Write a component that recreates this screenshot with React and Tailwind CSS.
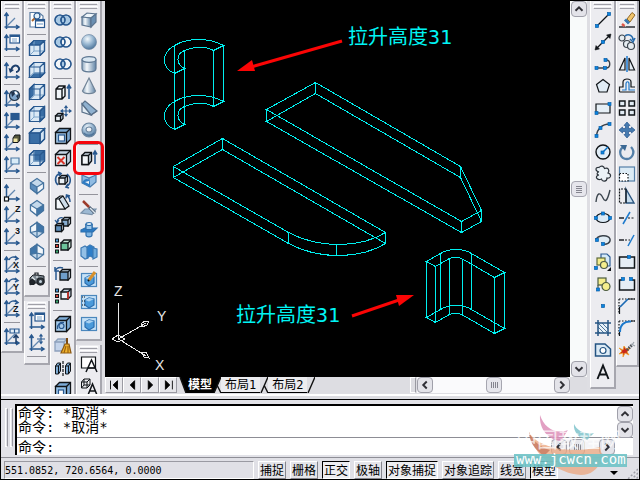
import { Fragment } from "react";

const B = "#28588f";
const K = "#101418";
const MID = "#7fa6cb";
const PALE = "#d3e4f3";

function Svg({ children, stroke = B }) {
  return (
    <svg viewBox="0 0 16 16" className="h-4 w-4 overflow-visible" fill="none" stroke={stroke} strokeWidth="1.2" aria-hidden="true">
      {children}
    </svg>
  );
}

// ---- UCS icons: the two axes plus a mark
function Axes({ children, diag }) {
  return (
    <Svg>
      <path d="M2.5 2V15H14M0.5 4L2.5 1L4.5 4M12 13L15 15L12 17M0.5 15H2.5V17" strokeWidth="1.5" />
      {diag && <path d="M3 14L11 6" strokeWidth="1.3" stroke="#6488b0" />}
      {children}
    </Svg>
  );
}

const Mark = ({ t, x = 10, y = 6 }) => (
  <text x={x} y={y} fontSize="9" fontWeight="700" fill={K} stroke="none" fontFamily="Liberation Sans, sans-serif">{t}</text>
);

const ucs = <Axes diag />;
const ucsDialog = (
  <Axes>
    <rect x="6" y="1" width="9.5" height="8" fill="#fff" />
    <path d="M6 2H15.5" strokeWidth="2" />
    <path d="M8 5H13M8 7H13" stroke={MID} />
  </Axes>
);
const ucsPrev = (
  <Axes>
    <path d="M7 9C8 3 13 2 15 6C15.500 8 14 10 12 10" strokeWidth="2" stroke="#1d3f6c" />
    <path d="M4.500 6L6 11L10 8Z" fill="#1d3f6c" stroke="none" />
  </Axes>
);
const ucsWorld = (
  <Axes diag>
    <circle cx="10.500" cy="5.500" r="5" fill={MID} stroke="#26384a" />
    <path d="M7 2L10 1L11 4L8 7ZM12 6L15 4L14 9Z" fill="#20344d" stroke="none" />
    <path d="M11 2L13 4" stroke="#fff" strokeWidth="2" />
  </Axes>
);
const ucsObject = <Axes diag><rect x="7" y="1.500" width="8" height="6" fill={B} /></Axes>;
const ucsFace = (
  <Axes diag>
    <path d="M9 4L11 1H16V6L14 8.500H9Z" fill="#55563c" stroke={K} strokeWidth="1" />
    <path d="M9.500 4.500H13.500V8H9.500Z" fill="#efe5a4" stroke="none" />
  </Axes>
);
const ucsView = <Axes diag><path d="M7 2H15V8H7Z" fill="#d9ecf8" stroke="#4f7aa5" /></Axes>;
const ucsOrigin = <Axes diag><rect x="0.500" y="13" width="4" height="4" fill="#fff" stroke={K} /></Axes>;
const ucsZ = <Axes diag><Mark t="Z" x={11} /></Axes>;
const ucs3 = <Axes diag><Mark t="3" x={11} /></Axes>;
const rot = (t) => (
  <Axes diag>
    <path d="M5 4C6 1 10 0 13 2M11 0L14 2.500L11 4" strokeWidth="1.500" />
    <Mark t={t} x={9} y={12} />
  </Axes>
);
const ucsApply = (
  <Axes diag>
    <path d="M6 1H15V5H6ZM10.500 1V5" fill="#e5eff8" />
    <path d="M12 16V8M9.500 10L12 7L14.500 10" stroke="#1d3f6c" strokeWidth="1.500" />
  </Axes>
);
const ucsMove = (
  <Axes diag>
    <path d="M12 1V9M8 5H16M10.500 2.500L12 0.500L13.500 2.500M10.500 7.500L12 9.500L13.500 7.500" />
  </Axes>
);

// ---- view icons
function ViewCube({ top, front, side, bottom, left, back }) {
  return (
    <Svg>
      <path d="M0.500 5L5 0.500H15.500V11L11 15.500H0.500Z" fill="#dbe9f5" />
      {back && <path d="M5 0.500H15.500V11H5Z" fill={back} />}
      {left && <path d="M0.500 5L5 0.500V11L0.500 15.500Z" fill={left} />}
      {bottom && <path d="M0.500 15.500L5 11H15.500L11 15.500Z" fill={bottom} />}
      {side && <path d="M11 5L15.500 0.500V11L11 15.500Z" fill={side} />}
      {top && <path d="M0.500 5L5 0.500H15.500L11 5Z" fill={top} />}
      {front && <path d="M0.500 5H11V15.500H0.500Z" fill={front} />}
      {!front && <path d="M5 0.500V11L0.500 15.500M5 11H15.500" stroke={MID} strokeWidth="1" />}
      <path d="M0.500 5H11V15.500H0.500ZM11 5L15.500 0.500M0.500 5L5 0.500H15.500V11L11 15.500" />
    </Svg>
  );
}

function IsoCube({ l = "#f2f7fb", r = "#f2f7fb", t = "#c4d9eb", open }) {
  return (
    <Svg stroke="#46749f">
      <path d="M1.500 5L8 0.500L14.500 5V10.500L8 15.500L1.500 10.500Z" fill={t} />
      {open ? (
        <>
          <path d="M1.500 5L8 0.500V9L1.500 10.500Z" fill={l} />
          <path d="M14.500 5L8 0.500V9L14.500 10.500Z" fill={r} />
          <path d="M8 9V15.500" />
        </>
      ) : (
        <>
          <path d="M1.500 5L8 9V15.500L1.500 10.500Z" fill={l} />
          <path d="M14.500 5L8 9V15.500L14.500 10.500Z" fill={r} />
        </>
      )}
    </Svg>
  );
}

const namedViews = (
  <Svg>
    <path d="M1 0.500H10L14 4V15H1Z" fill="#fff" stroke="#5b7da3" />
    <path d="M3 9L6 6" stroke="#a8642d" strokeWidth="2" />
    <circle cx="8" cy="4" r="3" fill="#e1f0fa" />
    <rect x="6.500" y="7.500" width="9" height="8" fill="#fff" />
    <path d="M6.500 8.500H15.500" strokeWidth="2" />
    <path d="M8 12H14" stroke={MID} />
  </Svg>
);
const camera = (
  <Svg stroke="#1c2126">
    <path d="M1 6L4 3H8L15 4V11L11 13L8 11H4L1 13Z" fill="#7d8891" strokeWidth="1" />
    <circle cx="3.500" cy="10" r="2.500" fill="#20262c" />
    <circle cx="11.500" cy="9.500" r="3.500" fill="#30383f" />
    <circle cx="11.500" cy="9.500" r="1.500" fill="#c3d2dd" stroke="none" />
    <path d="M6 3V1H9V3" />
    <path d="M3 5L6 8M8 4V6" stroke="#e1e6ea" />
  </Svg>
);

// ---- solid editing
const rings = (a, b, mid) => (
  <Svg>
    <circle cx="5" cy="8" r="5" fill={a} />
    <circle cx="11" cy="8" r="5" fill={b} />
    <path d="M8 4C10.500 6.500 10.500 9.500 8 12C5.500 9.500 5.500 6.500 8 4Z" fill={mid} />
    <circle cx="5" cy="8" r="5" />
    <circle cx="11" cy="8" r="5" />
  </Svg>
);

const Box = ({ x = 0, y = 4, s = 9, d = 3, fill = "#eaf1f7", stroke = K, deep = "#c3d4e4" }) => (
  <g stroke={stroke} strokeWidth="1.3">
    <path d={`M${x} ${y}l${d} ${-d}h${s}v${s}l${-d} ${d}z`} fill={deep} />
    <path d={`M${x} ${y}h${s}v${s}h${-s}z`} fill={fill} />
    <path d={`M${x + s} ${y}l${d} ${-d}`} />
  </g>
);

const extrudeFaces = (
  <Svg stroke={K}>
    <path d="M1 5L4 2H10V12L7 15H1ZM1 5H7V15M7 5L10 2" fill="#f1f6fa" strokeWidth="1.400" />
    <path d="M14 15V2M12 4.500L14 1L16 4.500" stroke={B} strokeWidth="1.600" />
  </Svg>
);
const moveFaces = (
  <Svg>
    <Box x={0.500} y={10} s={5} d={2.500} />
    <path d="M11 0V10M6 5H16M9.500 2L11 0L12.500 2M9.500 8L11 10L12.500 8M8 3.500L6 5L8 6.500M14 3.500L16 5L14 6.500" />
  </Svg>
);
const offsetFaces = <Svg><Box x={0.500} y={4.500} s={11} d={4} fill="#9fc3e3" deep="#7aa7d2" /><rect x="3.500" y="7" width="6" height="6" fill="#eef5fa" stroke={B} /></Svg>;
const deleteFaces = <Svg><Box x={0.500} y={4.500} s={11} d={4} /><path d="M2.500 7L9.500 14M9.500 7L2.500 14" stroke="#d8372c" strokeWidth="2" /></Svg>;
const rotateFaces = (
  <Svg>
    <Box x={4} y={6} s={6} d={2.500} />
    <path d="M3 13C-1 9 0 3 5 1.500M3 0L6 1.500L4 4M12 2C17 6 16 12 11 15M13 12L11 15L14 16" strokeWidth="1.600" />
  </Svg>
);
const taperFaces = (
  <Svg stroke={K}>
    <path d="M1 5L5 2H8L14 12L10 15H1Z" fill="#cfdeeb" />
    <path d="M1 5H4L10 15H1ZM4 5L8 2" fill="#f3f7fa" />
    <path d="M15 8C15 5 14 3 12 2M11 4.500L11.500 1L15 2" stroke={B} strokeWidth="1.500" />
  </Svg>
);
const copyFaces = (
  <Svg>
    <Box x={7} y={4} s={6} d={2.500} fill="#86add0" />
    <Box x={0.500} y={9.500} s={6} d={2} fill="#5f8fbc" />
    <path d="M2 6C2 3 5 1 8 2M0 4L2 7L4 4" />
  </Svg>
);
const swatches = (
  <g strokeWidth="1">
    <rect x="0.500" y="1" width="3" height="3" fill="#4b9fe0" stroke={K} />
    <rect x="0.500" y="6.500" width="3" height="3" fill="#d8453c" stroke={K} />
    <rect x="0.500" y="12" width="3" height="3" fill="#3aa76d" stroke={K} />
  </g>
);
const colorFaces = <Svg>{swatches}<Box x={6} y={5} s={7} d={3} fill="#6cc49b" deep="#c5e6d6" /></Svg>;
const copyEdges = (
  <Svg>
    <Box x={5} y={6} s={8} d={2.500} fill="#6e9ecb" />
    <path d="M1 14V5M0 5C2 1 5 1 8 2M0 1V5H4" strokeWidth="1.500" />
  </Svg>
);
const colorEdges = <Svg>{swatches}<Box x={6} y={4} s={7} d={3} /><path d="M13 4V11" stroke="#dd2c22" strokeWidth="1.500" /></Svg>;
const imprint = (
  <Svg>
    <Box x={0.500} y={4.500} s={11} d={4} fill="#a5caea" deep="#7eadd8" />
    <circle cx="6.500" cy="10" r="2.500" /><path d="M2.500 13C2 8 5 6 9 6.500" />
  </Svg>
);
const clean = (
  <Svg>
    <Box x={0} y={4} s={9} d={3} fill="#c3d3ea" stroke="#8da0bc" />
    <path d="M12 0V6" stroke="#7a4a12" strokeWidth="2" />
    <path d="M10 6H14L16 15H6Z" fill="#f0b32f" stroke="#8d5a12" />
    <path d="M11 8L9 15M13 8V15" stroke="#9d6510" />
  </Svg>
);
const separate = (
  <Svg stroke={K}>
    <path d="M0.500 6L2.500 3H5.500V11L3.500 14H0.500ZM0.500 6H3.500V14M3.500 6L5.500 3M10.500 6L12.500 3H15.500V11L13.500 14H10.500ZM10.500 6H13.500V14M13.500 6L15.500 3" fill="#7eaad1" strokeWidth="1" />
    <path d="M8 1V16" strokeDasharray="3 1" />
  </Svg>
);
const shell = <Svg><Box x={0.500} y={4.500} s={11} d={4} fill="#94bfe6" deep="#7caad6" /><rect x="3.500" y="8" width="5" height="5" fill="#fff" stroke={B} /></Svg>;

// ---- solids
const solidBox = (
  <Svg stroke="#5d7590">
    <path d="M1 5L6 1L15 2L10 6Z" fill="#eef5fa" />
    <path d="M1 5L10 6V15L1 13Z" fill="url(#steel)" />
    <path d="M10 6L15 2V10L10 15Z" fill="#6a8fb2" />
  </Svg>
);
const sphere = <Svg stroke="#7088a3"><circle cx="8" cy="8" r="7.500" fill="url(#ball)" strokeWidth="0.700" /></Svg>;
const cylinder = (
  <Svg stroke="#5f7893">
    <path d="M1 3.500V12.500C1 17 15 17 15 12.500V3.500" fill="url(#steel)" />
    <ellipse cx="8" cy="3.500" rx="7" ry="2.800" fill="#d9e7f2" />
  </Svg>
);
const cone = <Svg stroke="#718498"><path d="M8 0L14.500 13C13 16.500 3 16.500 1.500 13Z" fill="url(#steel)" /></Svg>;
const wedge = (
  <Svg stroke="#5a718a">
    <path d="M1 4L4 1L16 11L10 15Z" fill="#8fb1d0" />
    <path d="M1 4L10 15L1 12Z" fill="#e3edf5" />
    <path d="M10 15L16 11" />
  </Svg>
);
const torus = (
  <Svg stroke="#6b859f">
    <circle cx="8" cy="8" r="7" fill="url(#ball)" />
    <ellipse cx="8" cy="7.500" rx="3" ry="2.500" fill="#eef1f5" />
    <path d="M3 11C5 14 11 14 13 11" stroke="#4d7298" />
  </Svg>
);
const extrude = (
  <Svg stroke={K}>
    <path d="M1 5.500L4 2.500H10.500V11L7.500 14.500H1Z" fill="#cfdbe6" strokeWidth="1.400" />
    <path d="M1 5.500H7.500V14.500H1ZM7.500 5.500L10.500 2.500" fill="#f3f6f9" strokeWidth="1.400" />
    <path d="M14 14V2M12 4.500L14 1L16 4.500" stroke={B} strokeWidth="1.600" />
  </Svg>
);
const revolve = (
  <Svg stroke="#4a7cac">
    <path d="M1 3L7 1L15 3V10L9 15L1 11Z" fill="#8fbbe2" />
    <path d="M1 3L8 6L15 3M8 6V9" fill="#d8e8f4" />
    <path d="M1 11C3 6 8 6 9 10V15Z" fill="#2f7cc4" stroke="none" />
    <path d="M4 10L8 9V12Z" fill="#eef4f9" stroke="none" />
  </Svg>
);
const slice = (
  <Svg stroke="#7b93ab">
    <path d="M0 13L4 9L15 9L11 14.500Z" fill="#9db9d3" />
    <path d="M8 7L14 13" stroke="#44566a" strokeWidth="3" />
    <path d="M9 8L15 14" stroke="#dce6ee" strokeWidth="1.500" />
    <path d="M2 1L8 7" stroke="#9c3b2b" strokeWidth="2.500" />
  </Svg>
);
const section = (
  <Svg stroke="#2e70ae">
    <path d="M5 2V13C5 15.500 11 15.500 11 13V2" fill="#7fb4e2" />
    <path d="M0 8L4 6H16L12 10H0Z" fill="#2b7bc5" />
    <path d="M5 2V7.500H11V2" fill="#9cc7ea" />
    <ellipse cx="8" cy="2" rx="3" ry="1.500" fill="#e0eef8" />
  </Svg>
);
const interfere = (
  <Svg stroke="#3c7ab5">
    <path d="M0 4L4 2L7 4V14L4 15L0 12Z" fill="#93c0e6" />
    <path d="M6 3L9 1L13 3V14L9 12L6 14Z" fill="#2d7dc8" />
    <path d="M12 4L16 5V13L12 15Z" fill="#6eaadc" />
  </Svg>
);
const setupBox = (extra) => (
  <Svg stroke="#4b87bd">
    <rect x="0.500" y="1.500" width="15" height="13" fill="#c6e2f7" />
    <path d="M4 6L8 4L13 5V11L8 14L4 11Z" fill="#4b9ada" stroke="#2c6fb0" />
    <path d="M4 6L8 4L13 5L8 7.500Z" fill="#a9d2f2" stroke="none" />
    {extra}
  </Svg>
);
const setupDraw = setupBox(<><path d="M8 8L14 0" stroke="#d8902b" strokeWidth="3" /><path d="M7 9L8 8" stroke={K} strokeWidth="2" /></>);
const setupView = setupBox(<path d="M1 3H4M1 7H4M1 11H4" stroke={K} strokeDasharray="1 1" />);
const setupProfile = setupBox(null);
const draftA = (
  <Svg stroke={K}>
    <path d="M0.500 1H14.500V12H0.500Z" fill="#fff" />
    <path d="M5 16L10.500 4L16 16M7 12H14" strokeWidth="1.500" />
  </Svg>
);
const draftBox = (
  <Svg stroke={K}>
    <path d="M0.500 4L3 1H9V7L6 10H0.500ZM0.500 4H6V10M6 4L9 1M3 1V7H9M3 7L0.500 10" strokeWidth="1" />
    <path d="M7 17L11.500 6L16 17M9 13H14" strokeWidth="1.500" />
  </Svg>
);

// ---- draw
const Dot = ({ x, y }) => <rect x={x - 1.5} y={y - 1.5} width="3" height="3" fill="#0a84e0" stroke="#0b5fa8" strokeWidth="0.7" />;
const line = <Svg stroke={K}><path d="M2 14L14 2" /><Dot x={2} y={14} /><Dot x={14} y={2} /></Svg>;
const xline = <Svg stroke={K}><path d="M1 15L15 1" /><path d="M0 16L1 11.500L4.500 15ZM16 0L11.500 1L15 4.500Z" fill={K} strokeWidth="0.500" /><Dot x={8} y={8} /></Svg>;
const pline = <Svg stroke="#3a4149"><path d="M1 12H11C16 12 16 4 11 4" strokeWidth="1.400" /><Dot x={1.5} y={12} /><Dot x={10} y={12} /><Dot x={10.5} y={4} /></Svg>;
const polygon = <Svg stroke={K}><path d="M8 1.500L14.500 6.500L12 14H4L1.500 6.500Z" fill="#e1ecf5" /></Svg>;
const rectangle = <Svg stroke={K}><path d="M1 4H15V13H1Z" fill="#e6eff6" /><Dot x={1.5} y={13} /><Dot x={14.5} y={4} /></Svg>;
const arc = <Svg stroke="#3a4149"><path d="M1.500 14C2 7 7 2 14.500 2" strokeWidth="1.400" /><Dot x={1.5} y={14} /><Dot x={5.5} y={6} /><Dot x={14.5} y={2} /></Svg>;
const circle = <Svg stroke={K}><circle cx="8" cy="8" r="7" fill="#e1edf7" strokeWidth="1.400" /><path d="M8 8L13 3" stroke="#0a72c8" strokeWidth="1.500" /><Dot x={7.5} y={8.5} /></Svg>;
const revcloud = <Svg stroke="#2d343b"><path d="M4 6C0 5 0 1 4 1.500C6 -1 9 0 9.500 2.500C13 1 15 4 13 7C17 8 16 13 12 12C12 16 7 16 6.500 13C2 15 -1 10 4 9C1 9 2 6 4 6Z" fill="#eaf1f6" /></Svg>;
const spline = <Svg stroke="#3b444d"><path d="M1 14C2 4 5 4 8 10C11 16 13 10 15 2" strokeWidth="1.400" /></Svg>;
const ellipse = <Svg stroke={K}><ellipse cx="8" cy="8" rx="7" ry="4.500" fill="#dbeaf6" /><Dot x={1} y={8} /><Dot x={15} y={8} /><Dot x={8} y={3.5} /></Svg>;
const ellipseArc = <Svg stroke="#3a4149"><path d="M1 8C2 3 13 2 15 7C16 11 11 13 8 12" fill="#dfebf4" strokeWidth="1.400" /><Dot x={2} y={8} /><Dot x={8} y={12} /></Svg>;
const insertBlock = (
  <Svg stroke="#2c5c94">
    <path d="M6 0H12L15 3V12H6Z" fill="#d4e9f8" />
    <rect x="2" y="4" width="8" height="7" fill="#f5ee8c" stroke="#5e6a3d" />
    <circle cx="9" cy="11" r="3.500" fill="#f5ee8c" stroke="#4c5a48" />
    <Dot x={1} y={14} />
    <path d="M16 13V17H12Z" fill={K} stroke="none" />
  </Svg>
);
const makeBlock = <Svg stroke="#4b5b40"><rect x="3" y="2" width="8" height="7" fill="#f5ee8c" /><circle cx="11" cy="10.500" r="4" fill="#f5ee8c" /><path d="M3 9V14" /><Dot x={3} y={13.5} /></Svg>;
const point = <Svg><Dot x={8} y={8} /></Svg>;
const hatch = (
  <Svg stroke="#245482">
    <path d="M3 3H13V13H3Z" fill="#e7f1f8" stroke="none" />
    <path d="M3 7L9 13M3 3L13 13M7 3L13 9M3 11L5 13" strokeWidth="0.800" />
    <path d="M3 0V16M13 0V16M0 3H16M0 13H16" strokeWidth="1.500" />
  </Svg>
);
const region = <Svg stroke="#245482"><path d="M0.500 2H10L15.500 7V14H0.500Z" fill="#dbeaf5" strokeWidth="1.500" /><circle cx="8" cy="8.500" r="3" fill="#fff" /></Svg>;
const mtext = <Svg stroke={K}><path d="M2.500 15L8 1.500L13.500 15M4.500 10.500H11.500" strokeWidth="1.900" /></Svg>;

// ---- modify
const erase = (
  <Svg stroke={K}>
    <path d="M0 15H16" strokeWidth="1.300" />
    <path d="M8 7L13 0.500L16 3L11 10Z" fill="#f1c56c" stroke="#946a28" strokeWidth="1" />
    <path d="M6 7.500L10 11.500" stroke="#3676b0" strokeWidth="3" />
    <path d="M4 10.500L7.500 13.500" stroke="#f0efec" strokeWidth="3" />
    <path d="M3 12L5.500 14" stroke="#df5749" strokeWidth="2.500" />
  </Svg>
);
const copy = (
  <Svg stroke="#3c454e">
    <circle cx="3" cy="4" r="3" fill="#e6edf2" /><circle cx="8" cy="10" r="3.500" fill="#e6edf2" /><circle cx="12" cy="12" r="3.500" fill="#e6edf2" />
    <path d="M6 2C10 -1 14 2 14 6M11 5L14 8L16 4" stroke="#256aab" strokeWidth="1.600" />
  </Svg>
);
const mirror = <Svg stroke={K}><path d="M6 2V14H0.500ZM10 2V14H15.500Z" fill="#e5edf4" /><path d="M8 0V16" stroke="#1b7ad0" strokeWidth="1.500" /></Svg>;
const offset = <Svg stroke={K}><path d="M0.500 14H16M0.500 14V9H4V4C4 0 12 0 12 4V9H16" /><path d="M3 12H7V6C7 3 10 3 10 6V12H16" stroke="#1d77ca" /></Svg>;
const array = <Svg stroke={K}><path d="M0.500 1H6V6H0.500ZM10 1H15.500V6H10ZM0.500 10H6V15H0.500ZM10 10H15.500V15H10Z" fill="#e2ecf5" strokeWidth="1.400" /></Svg>;
const move = <Svg><path d="M8 0L11 3.500H9.500V6.500H12.500V5L16 8L12.500 11V9.500H9.500V12.500H11L8 16L5 12.500H6.500V9.500H3.500V11L0 8L3.500 5V6.500H6.500V3.500H5Z" fill="#467bb0" strokeWidth="0.700" /></Svg>;
const rotate = <Svg><path d="M12 3C17 8 13 15 8 15C1 15 -1 7 4 3" strokeWidth="2.300" stroke="#547fa8" /><path d="M1 1L8 1L6 7Z" fill="#3b6894" stroke="none" /></Svg>;
const scale = <Svg stroke="#547fa8"><rect x="0.500" y="1" width="15" height="14" fill="#dcebf5" /><path d="M0.500 7.500H9V15H0.500Z" fill="#fff" stroke={K} strokeDasharray="1.500 1.500" /></Svg>;
const stretch = <Svg stroke={K}><path d="M7 1L15 15H7Z" fill="#c6dced" stroke="#2b5580" strokeWidth="1.400" /><path d="M7 1H0.500V15H7" strokeDasharray="2 1" /><path d="M7 1V15" /></Svg>;
const trim = <Svg stroke={K}><path d="M0 8H5" strokeWidth="1.400" /><path d="M9 8H16" strokeDasharray="2 1.500" /><path d="M4 14L11 2" stroke="#1c79cc" strokeWidth="1.500" /></Svg>;
const extend = <Svg stroke={K}><path d="M0 8H5" strokeWidth="1.400" /><path d="M6 8H11" strokeDasharray="2 1.500" /><path d="M9 14L15 3" stroke="#1c79cc" strokeWidth="1.500" /></Svg>;
const breakPt = <Svg stroke={K}><path d="M0.500 3H15.500V14H0.500Z" fill="#e5edf5" strokeWidth="1.500" /><Dot x={10} y={3} /></Svg>;
const breakTwo = <Svg stroke={K}><path d="M3 4H0.500V14H15.500V4H13" fill="#e5edf5" strokeWidth="1.500" /><Dot x={4} y={3} /><Dot x={12} y={3} /></Svg>;
const chamfer = <Svg stroke={K}><path d="M0 1H16M0 1V16" strokeDasharray="1.500 1.500" /><path d="M0.500 16V9M9 1H16" /><path d="M1 9L9 1" stroke="#1c6ab4" strokeWidth="1.700" /></Svg>;
const fillet = <Svg stroke={K}><path d="M0 1H16M0 1V16" strokeDasharray="1.500 1.500" /><path d="M0.500 16V12M12 1H16" /><path d="M1 12C1 5 5 1 12 1.500" stroke="#1c79cc" strokeWidth="2" /></Svg>;
const explode = (
  <Svg>
    <path d="M0 6L4 8L5 4L7 7L11 6L8 10L10 13L6 11L4 15L4 11L0 12L3 9Z" fill="#c9281c" stroke="#f0a022" strokeWidth="0.800" />
    <path d="M8 8L13 3" stroke="#4a4f55" strokeWidth="3" strokeDasharray="1.500 1" />
    <path d="M12 2L16 4M15 0L13 3" stroke="#9aa2aa" />
  </Svg>
);

const FACE = "#3a6ea5";
const SEP = "|";

const UCS_BAR = [
  ["UCS", ucs], ["Display UCS Dialog", ucsDialog], SEP, ["UCS Previous", ucsPrev], SEP, ["World UCS", ucsWorld],
  ["Object UCS", ucsObject], ["Face UCS", ucsFace], ["View UCS", ucsView], SEP, ["Origin UCS", ucsOrigin],
  ["Z Axis Vector UCS", ucsZ], ["3 Point UCS", ucs3], SEP, ["X Axis Rotate UCS", rot("X")],
  ["Y Axis Rotate UCS", rot("Y")], ["Z Axis Rotate UCS", rot("Z")], SEP, ["Apply UCS", ucsApply],
];
const VIEW_BAR = [
  ["Named Views", namedViews], SEP, ["Top View", <ViewCube top={FACE} />], ["Bottom View", <ViewCube bottom={FACE} />],
  ["Left View", <ViewCube left={FACE} />], ["Right View", <ViewCube side={FACE} />],
  ["Front View", <ViewCube front={FACE} top={PALE} side={PALE} />], ["Back View", <ViewCube back={FACE} />], SEP,
  ["SW Isometric", <IsoCube l="#5c8ebd" />], ["SE Isometric", <IsoCube r="#3f75a8" />],
  ["NE Isometric", <IsoCube open r="#3f75a8" />], ["NW Isometric", <IsoCube open l="#3f75a8" />], SEP, ["Camera", camera],
];
const UCS2_BAR = [["UCS Dialog", ucsDialog], ["Move UCS Origin", ucsMove], SEP];
const SOLIDEDIT_BAR = [
  ["Union", rings("#a9c9e4", "#a9c9e4", "#a9c9e4")], ["Subtract", rings("#a9c9e4", "#f2f5f8", "#f2f5f8")],
  ["Intersect", rings("#f2f5f8", "#f2f5f8", "#a9c9e4")], SEP, ["Extrude Faces", extrudeFaces], ["Move Faces", moveFaces],
  ["Offset Faces", offsetFaces], ["Delete Faces", deleteFaces], ["Rotate Faces", rotateFaces], ["Taper Faces", taperFaces],
  ["Copy Faces", copyFaces], ["Color Faces", colorFaces], SEP, ["Copy Edges", copyEdges], ["Color Edges", colorEdges], SEP,
  ["Imprint", imprint], ["Clean", clean], ["Separate", separate], ["Shell", shell],
];
const SOLIDS_BAR = [
  ["Box", solidBox], ["Sphere", sphere], ["Cylinder", cylinder], ["Cone", cone], ["Wedge", wedge], ["Torus", torus], SEP,
  ["Extrude", extrude, true], ["Revolve", revolve], SEP, ["Slice", slice], ["Section", section], ["Interfere", interfere], SEP,
  ["Setup Drawing", setupDraw], ["Setup View", setupView], ["Setup Profile", setupProfile],
];
const TEXT_BAR = [["Draft Text", draftA], ["Draft Box", draftBox]];
const DRAW_BAR = [
  ["Line", line], ["Construction Line", xline], ["Polyline", pline], ["Polygon", polygon], ["Rectangle", rectangle],
  ["Arc", arc], ["Circle", circle], ["Revision Cloud", revcloud], ["Spline", spline], ["Ellipse", ellipse],
  ["Ellipse Arc", ellipseArc], ["Insert Block", insertBlock], ["Make Block", makeBlock], ["Point", point],
  ["Hatch", hatch], ["Region", region], ["Multiline Text", mtext],
];
const MODIFY_BAR = [
  ["Erase", erase], ["Copy", copy], ["Mirror", mirror], ["Offset", offset], ["Array", array], ["Move", move],
  ["Rotate", rotate], ["Scale", scale], ["Stretch", stretch], ["Trim", trim], ["Extend", extend],
  ["Break at Point", breakPt], ["Break", breakTwo], ["Chamfer", chamfer], ["Fillet", fillet], ["Explode", explode],
];

function Toolbar({ items, label }) {
  return (
    <div role="toolbar" aria-label={label} className="flex shrink-0 flex-col border-r-2 border-b-2 border-[#a6a6ae] border-l border-l-white bg-[#ececf0] pb-1">
      <div className="mx-0.5 mt-px mb-px h-[3px] rounded-sm border border-white border-b-[#a0a0a8]" />
      <div className="mx-0.5 h-[3px] rounded-sm border border-white border-b-[#a0a0a8]" />
      {items.map((item, i) =>
        item === SEP ? (
          <div key={i} className="flex h-1.5 items-center px-0.5">
            <div className="h-px flex-1 bg-[#94949c]" />
          </div>
        ) : (
          <button key={i} type="button" aria-label={item[0]} className="relative flex h-[22px] w-full items-center justify-center">
            {item[1]}
            {item[2] && <span className="absolute -inset-x-1 -inset-y-1.5 z-10 rounded-md border-[3px] border-[#f5050d]" />}
          </button>
        )
      )}
    </div>
  );
}

const ARROWS = {
  up: "M4 10L8 6L12 10",
  down: "M4 6L8 10L12 6",
  left: "M10 4L6 8L10 12",
  right: "M6 4L10 8L6 12",
};

function ScrollButton({ dir }) {
  return (
    <button type="button" aria-label={`Scroll ${dir}`} className="flex h-4 w-4 shrink-0 items-center justify-center rounded-sm border border-[#a0a0aa] bg-[#e3e3e9]">
      <svg viewBox="0 0 16 16" className="h-4 w-4" fill="none" stroke="#303036" strokeWidth="2.2"><path d={ARROWS[dir]} /></svg>
    </button>
  );
}

function Thumb({ vertical }) {
  return (
    <div className="flex h-4 w-4 shrink-0 items-center justify-center rounded-sm border border-[#a6a6b0] bg-[#e6e6ec]">
      <svg viewBox="0 0 8 8" className="h-2 w-2" stroke="#85858f" strokeWidth="1" shapeRendering="crispEdges">
        <path d={vertical ? "M1 1.5H7M1 3.5H7M1 5.5H7M1 7.5H7" : "M1.5 1V7M3.5 1V7M5.5 1V7M7.5 1V7"} />
      </svg>
    </div>
  );
}

function Drawing() {
  return (
    <svg viewBox="105 1 465 376" preserveAspectRatio="xMinYMin meet" className="block h-full w-full" fill="none">
      <g stroke="#00f0f0" strokeWidth="1" shapeRendering="crispEdges">
        {/* hook-shaped part, top left */}
        {[0, 56].map((dy) => (
          <path key={dy} transform={`translate(0 ${dy})`} d="M174.500 45.500C187 38 208 37 223.500 45.500L213.500 50.500C206 46.500 195 46.500 184.500 50.500C176 54 175.500 64 184.500 68.500L174.500 73.500C161 67 161 53 174.500 45.500Z" />
        ))}
        <path d="M174.500 45.500V129.500M184.500 50.500V124M213.500 50.500V106.500M223.500 45.500V101.500" />
        {/* long plate with a bevelled end */}
        <path d="M266.500 109.500L315.500 82.500L460.500 166.500L481.500 210.500L461.500 221.500ZM266.500 121.500L315.500 93.500L460.500 177.500L481.500 221.500L461.500 232.500ZM266.500 109.500V121.500M315.500 82.500V93.500M460.500 166.500V177.500M481.500 210.500V221.500M461.500 221.500V232.500" />
        {/* plate with a rounded end */}
        {[0, 11].map((dy) => (
          <path key={dy} transform={`translate(0 ${dy})`} d="M173.500 166.500L222.500 138.500L385.500 232.500C362 247 322 250 288.500 232.500Z" />
        ))}
        <path d="M173.500 166.500V177.500M222.500 138.500V149.500M385.500 232.500V243.500M288.500 232.500V243.500M336.500 244.500V255.500" />
        {/* curved bracket, bottom right */}
        {[0, 56].map((dy) => (
          <path key={dy} transform={`translate(0 ${dy})`} d="M426.500 261.500L440.500 253.500C449 248 463 248 471.500 253.500L504.500 272.500L494.500 277.500L463.500 259.500C458 256.500 454 256.500 449.500 258.500L435.500 266.500Z" />
        ))}
        <path d="M426.500 261.500V317.500M435.500 266.500V322.500M440.500 253.500V309.500M449.500 258.500V314M462.500 259V315M471.500 253.500V309.500M494.500 277.500V333.500M504.500 272.500V328.500" />
      </g>
      {/* callouts */}
      <g fill="#fb0505" stroke="#fb0505">
        <path d="M342 41L251 67" strokeWidth="3" />
        <path d="M237 71L252 60L255 71Z" stroke="none" />
        <path d="M352 316L399 300" strokeWidth="3" />
        <path d="M414 295L396 295L399 306Z" stroke="none" />
      </g>
      <g fill="#00f4f4" fontSize="20" fontFamily="'DejaVu Sans Mono', 'Noto Sans CJK SC', monospace">
        <text x="348" y="44">拉升高度31</text>
        <text x="236" y="322">拉升高度31</text>
      </g>
      {/* UCS tripod */}
      <g stroke="#e8e8e8" shapeRendering="crispEdges">
        <path d="M118.500 303V339L146 323M118.500 339L146 356M112 339L118 335L125 339L118 342ZM141 324L145 321H149L147 325L142 327ZM141 352L146 352L149 358L144 357Z" />
      </g>
      <g fill="#e8e8e8" fontSize="14" fontFamily="'Liberation Sans', sans-serif">
        <text x="114" y="296">Z</text>
        <text x="157" y="321">Y</text>
        <text x="155" y="370">X</text>
      </g>
    </svg>
  );
}

const NAV = ["M4 3V13M12 3V13L7 8Z", "M11 3V13L6 8Z", "M6 3V13L11 8Z", "M13 3V13M5 3V13L10 8Z"];

function Slash({ d, fill }) {
  return (
    <svg viewBox="0 0 8 16" preserveAspectRatio="none" className="h-4 w-2 shrink-0">
      {fill && <path d={fill[0]} fill={fill[1]} />}
      <path d={d} stroke="#101010" strokeWidth="1.4" fill="none" />
    </svg>
  );
}

function LayoutTabs() {
  return (
    <div className="flex h-4 shrink-0 bg-[#dddde2]">
      {NAV.map((d, i) => (
        <button key={i} type="button" aria-label={["First tab", "Previous tab", "Next tab", "Last tab"][i]} className="flex w-[18px] shrink-0 items-center justify-center border border-white border-r-[#9a9aa2] border-b-[#9a9aa2] bg-[#e6e6ea]">
          <svg viewBox="0 0 16 16" className="h-3.5 w-4" fill="#000" stroke="#000"><path d={d} /></svg>
        </button>
      ))}
      <div className="ml-0.5 flex text-xs leading-4 text-black">
        <Slash d="M1 0L7 16" fill={["M1 0H8V16H7Z", "#000"]} />
        <button type="button" className="bg-black px-px font-bold text-white">模型</button>
        <Slash d="M8 0L1 16M4 8L8 16" fill={["M0 0H8L1 16H0Z", "#000"]} />
        <button type="button" className="border-b border-black bg-[#ececef] px-1">布局1</button>
        <Slash d="M8 0L1 16M4 8L8 16" />
        <button type="button" className="border-b border-black bg-[#ececef] px-1">布局2</button>
        <Slash d="M8 0L1 16" />
      </div>
      <div className="min-w-0 flex-1" />
      <div className="mr-px w-1.5 border border-white border-r-[#9a9aa2]" />
      <div className="flex w-[153px] justify-between bg-[#fafafc]">
        <ScrollButton dir="left" />
        <Thumb />
        <ScrollButton dir="right" />
      </div>
      <div className="w-[17px]" />
    </div>
  );
}

function CommandWindow() {
  return (
    <section className="flex h-[57px] shrink-0 bg-[#e2e2e8] pt-1 pr-1.5 pb-0.5 pl-1 text-sm">
      <div className="mt-1 mr-0.5 mb-2 flex gap-0.5">
        <div className="w-[3px] border border-white border-r-[#9898a0]" />
        <div className="w-[3px] border border-white border-r-[#9898a0]" />
      </div>
      <div className="flex min-w-0 flex-1 flex-col border-t-2 border-l-2 border-black bg-white">
        <div className="flex h-8 border-b border-[#8d8d95]">
          <div className="flex-1 overflow-hidden pl-px leading-[14px] whitespace-pre text-black">
            <p>命令: *取消*</p>
            <p>命令: *取消*</p>
          </div>
          <div className="flex flex-col">
            <ScrollButton dir="up" />
            <ScrollButton dir="down" />
          </div>
        </div>
        <div className="flex flex-1 items-center">
          <label htmlFor="command" className="pl-px leading-4">命令:</label>
          <input id="command" className="h-4 min-w-0 flex-1 outline-none" />
          <div className="mr-[18px] flex w-16 justify-between bg-[#f4f4f7]">
            <ScrollButton dir="left" />
            <Thumb />
            <span className="w-2.5" />
            <ScrollButton dir="right" />
          </div>
        </div>
      </div>
    </section>
  );
}

const MODES = [
  ["捕捉", false], ["栅格", false], ["正交", true], ["极轴", false],
  ["对象捕捉", true], ["对象追踪", false], ["线宽", false], ["模型", true],
];

function StatusBar() {
  return (
    <footer className="flex h-[22px] shrink-0 items-end gap-1 border-t border-[#8e8e96] bg-[#e0e0e6] pr-px pl-[3px] text-xs text-black">
      <output className="h-[18px] w-[250px] shrink-0 border border-[#9a9aa2] border-r-white border-b-white text-[10px] leading-[18px]">
        551.0852, 720.6564, 0.0000
      </output>
      {MODES.map(([name, on]) => (
        <button
          key={name}
          type="button"
          aria-pressed={on}
          className={`h-[18px] shrink-0 border px-px leading-[18px] whitespace-nowrap ${
            on ? "border-black border-r-white border-b-white bg-[#ededf1]" : "border-white border-r-[#85858d] border-b-[#85858d] bg-[#e4e4e9]"
          }`}
        >
          {name}
        </button>
      ))}
      <span className="flex-1" />
      <button type="button" aria-label="Status bar menu" className="mb-0.5 h-2 w-2">
        <svg viewBox="0 0 8 8" className="h-2 w-2"><path d="M0 2H8L4 6Z" /></svg>
      </button>
      <svg viewBox="0 0 12 12" className="ml-1 h-3 w-3" stroke="#9c9ca5" strokeWidth="1.5" strokeDasharray="2 2"><path d="M12 2L2 12M12 6L6 12M12 10L10 12" /></svg>
    </footer>
  );
}

function SiteBadge() {
  return (
    <div className="pointer-events-none absolute right-3 bottom-0.5 h-16 w-[113px]">
      <svg viewBox="0 0 113 64" className="h-full w-full">
        <path d="M26 2C30 15 42 22 54 17L47 28C35 27 25 17 26 2Z" fill="#dd8fb8" opacity="0.85" />
        <path d="M60 11C63 18 72 22 80 20L73 27C65 25 59 19 60 11Z" fill="#7fc3cb" opacity="0.85" />
        <path d="M15 19C21 32 50 42 86 34L89 47C82 57 77 62 67 62C45 61 18 42 15 19Z" fill="#eba57e" opacity="0.75" />
        <path d="M15 19C19 29 28 35 36 37L30 43C20 36 15 28 15 19Z" fill="#b9634b" opacity="0.6" />
        <text x="2" y="34" fontSize="21" fill="#fff" opacity="0.7" fontFamily="'Noto Sans CJK SC', sans-serif">中国教程网</text>
        <rect x="0" y="41" width="113" height="13" fill="#6fc3c6" opacity="0.9" />
        <text x="2" y="51" fontSize="14" fill="#fff" fontFamily="'DejaVu Sans Mono', monospace">www.jcwcn.com</text>
      </svg>
    </div>
  );
}

export default function App() {
  const left = [
    [["UCS", UCS_BAR]],
    [["View", VIEW_BAR], ["UCS II", UCS2_BAR]],
    [["Solids Editing", SOLIDEDIT_BAR]],
    [["Solids", SOLIDS_BAR], ["Text", TEXT_BAR]],
  ];
  const widths = ["w-[23px]", "w-[26px]", "w-[26px]", "w-[26px]"];

  return (
    <div className="relative flex h-screen flex-col overflow-hidden border border-black bg-[#dedee3] font-['DejaVu_Sans_Mono','Noto_Sans_CJK_SC',monospace]">
      <svg className="absolute h-0 w-0" aria-hidden="true">
        <defs>
          <linearGradient id="steel">
            <stop offset="0" stopColor="#8aa5be" />
            <stop offset="0.35" stopColor="#f4f8fb" />
            <stop offset="1" stopColor="#5f83a6" />
          </linearGradient>
          <radialGradient id="ball" cx="0.4" cy="0.3" r="0.7">
            <stop offset="0" stopColor="#f4f9fc" />
            <stop offset="0.5" stopColor="#9cbad4" />
            <stop offset="1" stopColor="#50779c" />
          </radialGradient>
        </defs>
      </svg>

      <main className="flex min-h-0 flex-1 overflow-hidden">
        <div className="flex shrink-0 pr-[3px]">
          {left.map((column, i) => (
            <div key={i} className={`flex flex-col gap-1 ${widths[i]}`}>
              {column.map(([label, items]) => (
                <Fragment key={label}>
                  <Toolbar label={label} items={items} />
                </Fragment>
              ))}
            </div>
          ))}
        </div>

        <div className="flex min-w-0 flex-1 flex-col pb-px">
          <div className="flex min-h-0 flex-1">
            <div className="min-w-0 flex-1 bg-black">
              <Drawing />
            </div>
            <div className="flex w-[17px] shrink-0 flex-col items-center justify-between bg-[#f8fafa]">
              <ScrollButton dir="up" />
              <Thumb vertical />
              <ScrollButton dir="down" />
            </div>
          </div>
          <LayoutTabs />
        </div>

        <div className="flex shrink-0 items-start pl-[3px]">
          <div className="w-[26px]"><Toolbar label="Draw" items={DRAW_BAR} /></div>
          <div className="w-[23px]"><Toolbar label="Modify" items={MODIFY_BAR} /></div>
        </div>
      </main>

      <div className="h-1.5 shrink-0 border-t-2 border-b border-t-white border-b-black bg-[#dcdce1]" />
      <CommandWindow />
      <StatusBar />
      <SiteBadge />
    </div>
  );
}
